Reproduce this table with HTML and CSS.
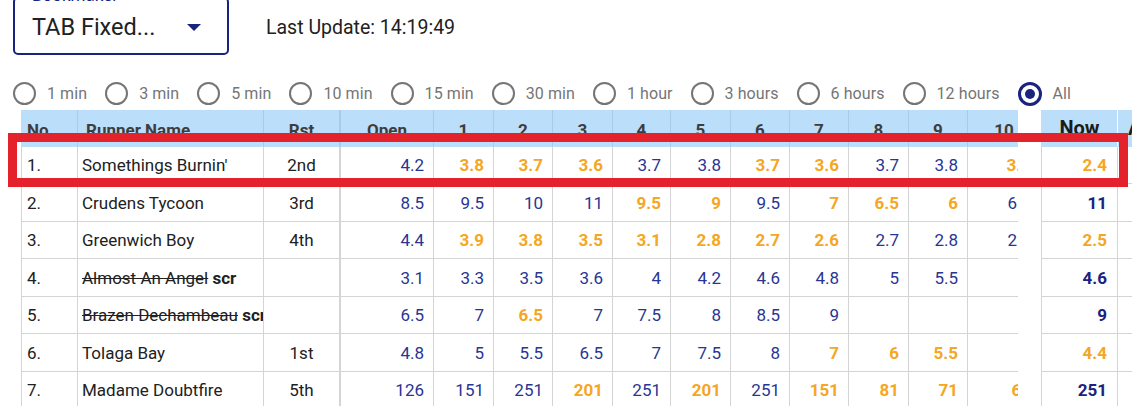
FILE: index.html
```html
<!DOCTYPE html>
<html lang="en">
<head>
<meta charset="utf-8">
<title>Market movers</title>
<link rel="stylesheet" href="styles.css">
</head>
<body>
<div class="toolbar">
  <div class="select">
    <span class="select-label">Bookmaker</span>
    <span class="select-value">TAB Fixed...</span>
    <svg class="select-arrow" viewBox="0 0 14 7"><path d="M0 0h14L7 7z"/></svg>
  </div>
  <div class="last-update">Last Update: 14:19:49</div>
</div>

<div class="ranges">
  <label class="range"><span class="radio"></span>1 min</label>
  <label class="range"><span class="radio"></span>3 min</label>
  <label class="range"><span class="radio"></span>5 min</label>
  <label class="range"><span class="radio"></span>10 min</label>
  <label class="range"><span class="radio"></span>15 min</label>
  <label class="range"><span class="radio"></span>30 min</label>
  <label class="range"><span class="radio"></span>1 hour</label>
  <label class="range"><span class="radio"></span>3 hours</label>
  <label class="range"><span class="radio"></span>6 hours</label>
  <label class="range"><span class="radio"></span>12 hours</label>
  <label class="range"><span class="radio checked"></span>All</label>
</div>

<div class="tables">
  <div class="scroll">
    <div class="grid">
      <div class="row head">
        <div class="c-no">No</div><div class="c-name">Runner Name</div><div class="c-rst">Rst</div><div class="c-open">Open</div>
        <div>1</div><div>2</div><div>3</div><div>4</div><div>5</div><div>6</div><div>7</div><div>8</div><div>9</div><div>10</div>
      </div>
      <div class="row">
        <div class="c-no">1.</div><div class="c-name">Somethings Burnin'</div><div class="c-rst">2nd</div><div class="num c-open">4.2</div>
        <div class="num up">3.8</div><div class="num up">3.7</div><div class="num up">3.6</div><div class="num">3.7</div><div class="num">3.8</div><div class="num up">3.7</div><div class="num up">3.6</div><div class="num">3.7</div><div class="num">3.8</div><div class="num up">3.5</div>
      </div>
      <div class="row">
        <div class="c-no">2.</div><div class="c-name">Crudens Tycoon</div><div class="c-rst">3rd</div><div class="num c-open">8.5</div>
        <div class="num">9.5</div><div class="num">10</div><div class="num">11</div><div class="num up">9.5</div><div class="num up">9</div><div class="num">9.5</div><div class="num up">7</div><div class="num up">6.5</div><div class="num up">6</div><div class="num">6.5</div>
      </div>
      <div class="row">
        <div class="c-no">3.</div><div class="c-name">Greenwich Boy</div><div class="c-rst">4th</div><div class="num c-open">4.4</div>
        <div class="num up">3.9</div><div class="num up">3.8</div><div class="num up">3.5</div><div class="num up">3.1</div><div class="num up">2.8</div><div class="num up">2.7</div><div class="num up">2.6</div><div class="num">2.7</div><div class="num">2.8</div><div class="num">2.9</div>
      </div>
      <div class="row">
        <div class="c-no">4.</div><div class="c-name"><s>Almost An Angel</s>&nbsp;<b>scr</b></div><div class="c-rst"></div><div class="num c-open">3.1</div>
        <div class="num">3.3</div><div class="num">3.5</div><div class="num">3.6</div><div class="num">4</div><div class="num">4.2</div><div class="num">4.6</div><div class="num">4.8</div><div class="num">5</div><div class="num">5.5</div><div class="num"></div>
      </div>
      <div class="row">
        <div class="c-no">5.</div><div class="c-name"><s>Brazen Dechambeau</s>&nbsp;<b>scr</b></div><div class="c-rst"></div><div class="num c-open">6.5</div>
        <div class="num">7</div><div class="num up">6.5</div><div class="num">7</div><div class="num">7.5</div><div class="num">8</div><div class="num">8.5</div><div class="num">9</div><div class="num"></div><div class="num"></div><div class="num"></div>
      </div>
      <div class="row">
        <div class="c-no">6.</div><div class="c-name">Tolaga Bay</div><div class="c-rst">1st</div><div class="num c-open">4.8</div>
        <div class="num">5</div><div class="num">5.5</div><div class="num">6.5</div><div class="num">7</div><div class="num">7.5</div><div class="num">8</div><div class="num up">7</div><div class="num up">6</div><div class="num up">5.5</div><div class="num"></div>
      </div>
      <div class="row">
        <div class="c-no">7.</div><div class="c-name">Madame Doubtfire</div><div class="c-rst">5th</div><div class="num c-open">126</div>
        <div class="num">151</div><div class="num">251</div><div class="num up">201</div><div class="num">251</div><div class="num up">201</div><div class="num">251</div><div class="num up">151</div><div class="num up">81</div><div class="num up">71</div><div class="num up">61</div>
      </div>
    </div>
  </div>

  <div class="side">
    <div class="srow head"><div class="c-now">Now</div><div class="c-avg">Avg</div></div>
    <div class="srow"><div class="num now up">2.4</div><div></div></div>
    <div class="srow"><div class="num now">11</div><div></div></div>
    <div class="srow"><div class="num now up">2.5</div><div></div></div>
    <div class="srow"><div class="num now">4.6</div><div></div></div>
    <div class="srow"><div class="num now">9</div><div></div></div>
    <div class="srow"><div class="num now up">4.4</div><div></div></div>
    <div class="srow"><div class="num now">251</div><div></div></div>
  </div>
</div>

<div class="highlight"></div>
</body>
</html>
```

FILE: styles.css
```css
html, body {
  margin: 0;
  padding: 0;
  overflow: hidden;
  background: #fff;
}
body {
  position: relative;
  width: 1132px;
  height: 406px;
  font-family: Roboto, "Noto Sans", "Liberation Sans", sans-serif;
  color: #212121;
}

/* top toolbar */
.toolbar {
  display: flex;
  align-items: center;
  padding-left: 13px;
  margin-top: -3px;
}
.select {
  position: relative;
  box-sizing: border-box;
  width: 216px;
  height: 58px;
  border: 2px solid #1a237e;
  border-radius: 5px;
  display: flex;
  align-items: center;
  padding-left: 17px;
  padding-top: 2px;
}
.select-label {
  position: absolute;
  left: 12px;
  top: -14px;
  padding: 0 5px;
  background: #fff;
  font-size: 17px;
  line-height: 20px;
  color: #1a237e;
}
.select-value {
  flex: 1;
  font-size: 23.5px;
  color: #212121;
}
.select-arrow {
  width: 14px;
  height: 7px;
  margin-right: 26px;
  fill: #1a237e;
}
.last-update {
  margin-left: 37px;
  padding-top: 3px;
  font-size: 19.5px;
  color: #212121;
}

/* range radios */
.ranges {
  display: flex;
  align-items: center;
  gap: 18px;
  height: 23px;
  margin-top: 27px;
  padding-left: 13px;
}
.range {
  display: flex;
  align-items: center;
  gap: 11px;
  font-size: 16px;
  letter-spacing: 0.08px;
  color: #757575;
}
.radio {
  position: relative;
  box-sizing: border-box;
  width: 23px;
  height: 23px;
  border: 2px solid #757575;
  border-radius: 50%;
}
.radio.checked {
  width: 24px;
  height: 24px;
  border: 3px solid #1a237e;
}
.radio.checked::after {
  content: "";
  position: absolute;
  left: 4px;
  top: 4px;
  width: 10px;
  height: 10px;
  border-radius: 50%;
  background: #1a237e;
}

/* tables */
.tables {
  display: flex;
  margin-top: 5px;
}
.scroll {
  flex: none;
  width: 997px;
  margin-left: 21px;
  overflow: hidden;
}
.grid {
  width: 1020px;
}
.row {
  display: grid;
  grid-template-columns: 57px 186px 77px 93px 60px 59px 60px 58px 60px 59px 59px 60px 59px 73px;
  height: 37px;
}
.row:nth-child(odd) {
  height: 38px;
}
.row.head {
  height: 37px;
}
.row > div,
.srow > div {
  box-sizing: border-box;
  display: flex;
  align-items: center;
  justify-content: center;
  overflow: hidden;
  white-space: nowrap;
  border-right: 1px solid #d4d4d4;
  border-bottom: 1px solid #d4d4d4;
  font-size: 17px;
  color: #212121;
}
.row > div:first-child {
  border-left: 1px solid #d4d4d4;
}
.row > .c-rst {
  border-right: 2px solid #d4d4d4;
}
.row > .c-no {
  justify-content: flex-start;
  padding-left: 5px;
}
.row > .c-name {
  justify-content: flex-start;
  padding-left: 4px;
}
.row > .c-name b {
  font-weight: 700;
}
.row > .num {
  justify-content: flex-end;
  padding-right: 9px;
  color: #283593;
}
.row > .num.up,
.srow > .num.up {
  color: #f5a623;
  font-weight: 700;
}

/* header rows */
.row.head > div,
.srow.head > div {
  align-items: flex-end;
  padding-bottom: 6px;
  background: #bbdefb;
  border-right-color: #a9cbe8;
  border-bottom-color: #bbdefb;
  font-weight: 700;
  color: #3d3d3d;
}
.row.head > div:first-child {
  border-left-color: #bbdefb;
}
.row.head > .c-name {
  padding-left: 8px;
}
.row.head > .c-no {
  padding-left: 5px;
}

/* right fixed table */
.side {
  flex: none;
  margin-left: 23px;
}
.srow {
  display: grid;
  grid-template-columns: 77px 90px;
  height: 37px;
}
.srow:nth-child(odd) {
  height: 38px;
}
.srow.head {
  height: 37px;
}
.srow > div:first-child {
  border-left: 1px solid #d4d4d4;
}
.srow.head > div:first-child {
  border-left-color: #bbdefb;
}
.srow.head > div {
  padding-bottom: 6px;
  font-size: 20px;
  color: #1c1c1c;
  border-right-color: #fff;
}
.srow.head > .c-avg {
  justify-content: flex-start;
  padding-left: 10px;
}
.srow > .now {
  justify-content: flex-end;
  padding-right: 10px;
  font-weight: 700;
  color: #1a237e;
}

/* annotation overlay */
.highlight {
  position: absolute;
  left: 8px;
  top: 133px;
  width: 1120px;
  height: 54px;
  box-sizing: border-box;
  border: 9px solid #e3222b;
}
```
